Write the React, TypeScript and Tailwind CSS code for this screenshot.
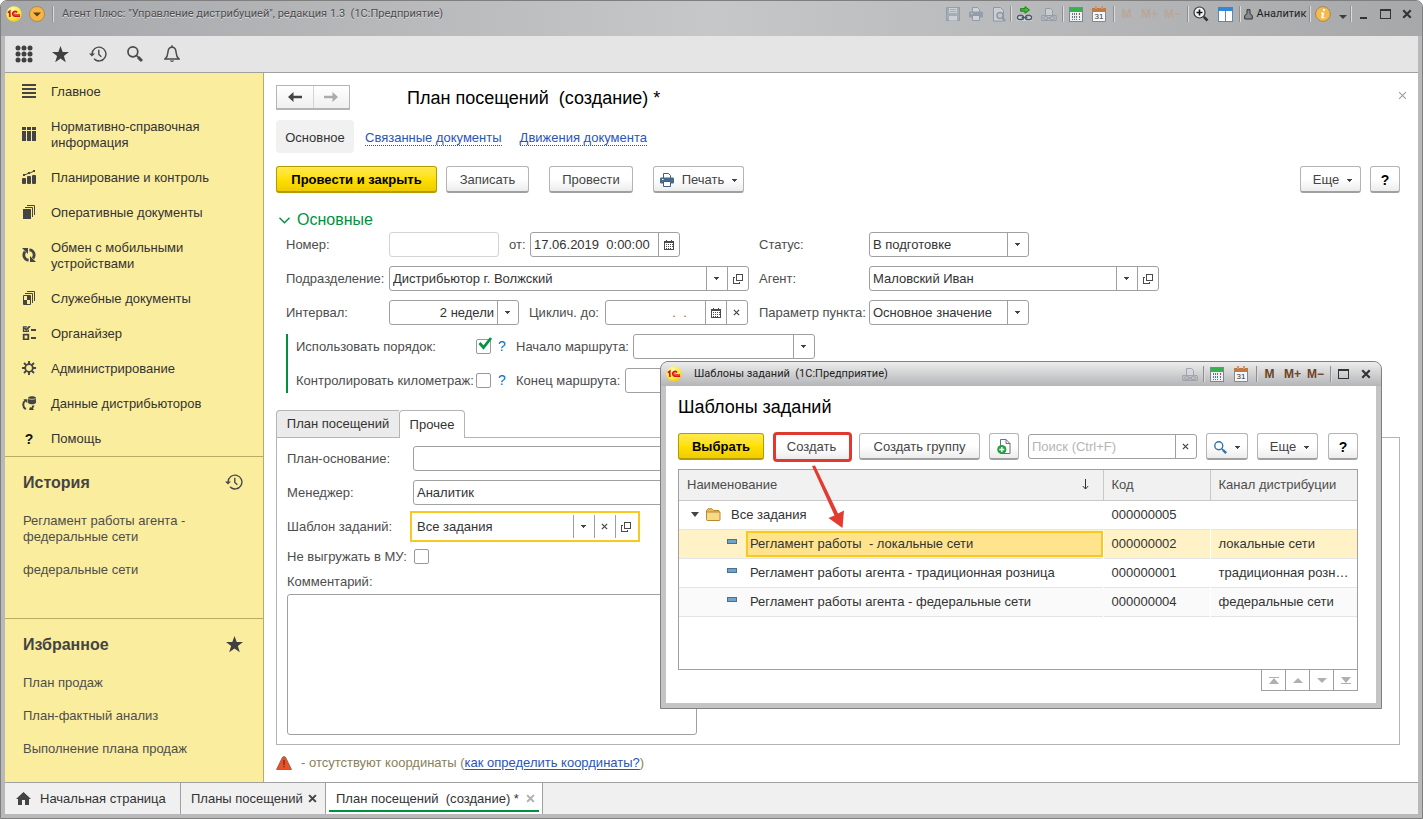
import React from "react";
import clsx from "clsx";

type IconProps = { className?: string };

/* ---------- small glyphs ---------- */

const Caret: React.FC<IconProps> = ({ className }) => (
  <svg width="5" height="3" viewBox="0 0 5 3" className={className} shapeRendering="crispEdges" fill="currentColor">
    <path d="M0 0h5v1H4v1H3v1H2V2H1V1H0z" />
  </svg>
);

const Cross: React.FC<IconProps & { size?: number; weight?: number }> = ({ className, size = 7, weight = 1.4 }) => (
  <svg width={size} height={size} viewBox="0 0 8 8" className={className} stroke="currentColor" strokeWidth={weight}>
    <path d="M1 1l6 6M7 1L1 7" />
  </svg>
);

const OpenIcon = () => (
  <svg width="10" height="10" viewBox="0 0 10 10" fill="none" stroke="#4a4a4a" shapeRendering="crispEdges">
    <path d="M3.5 0.5h6v6h-6zM2 3.5H0.5v6h6V8" />
  </svg>
);

const CalendarIcon = () => (
  <svg width="10" height="10" viewBox="0 0 10 10" shapeRendering="crispEdges">
    <path d="M0 1h10v9H0z" fill="#4a4a4a" />
    <path d="M2 0h1v2H2zM7 0h1v2H7z" fill="#4a4a4a" />
    <path d="M1 3h8v6H1z" fill="#fff" />
    <path d="M2 4h1v1H2zM4 4h1v1H4zM6 4h1v1H6zM2 6h1v1H2zM4 6h1v1H4zM6 6h1v1H6zM8 4h1v1H8zM8 6h1v1H8zM2 8h1v1H2zM4 8h1v1H4zM6 8h1v1H6z" fill="#4a4a4a" />
  </svg>
);

const Star: React.FC<IconProps> = ({ className }) => (
  <svg width="17" height="17" viewBox="0 0 17 17" className={className} fill="#404040">
    <path d="M8.5 0l2.2 6H17l-5.1 3.9 1.9 6.3-5.3-3.8-5.3 3.8 1.9-6.3L0 6h6.3z" />
  </svg>
);

const HistoryIcon: React.FC<IconProps> = ({ className }) => (
  <svg width="18" height="18" viewBox="0 0 18 18" className={className} fill="none" stroke="#4a4a4a" strokeWidth="1.4">
    <path d="M3.1 9A6.9 6.9 0 1 1 5 13.8" />
    <path d="M6.5 15.2a6.9 6.9 0 0 0 3 .7" />
    <path d="M9.8 4.8v4.6l2.6 2.4" />
    <path d="M0 8.4h6L3 11.6z" fill="#4a4a4a" stroke="none" />
  </svg>
);

const Logo: React.FC = () => (
  <svg width="16" height="16" viewBox="0 0 16 16" aria-hidden="true">
    <defs>
      <radialGradient id="logoFill" cx="0.4" cy="0.3" r="0.8">
        <stop offset="0" stopColor="#fffbc0" />
        <stop offset="0.6" stopColor="#fde93a" />
        <stop offset="1" stopColor="#e8b81c" />
      </radialGradient>
    </defs>
    <circle cx="8" cy="8" r="7.7" fill="url(#logoFill)" />
    <g fill="none" stroke="#d8141c" strokeWidth="1.7">
      <path d="M1.8 6.6L3.8 5.2V11" />
      <path d="M11 6.4A2.4 2.4 0 1 0 8.6 10.2H14" />
      <path d="M9.6 7.4a.9.9 0 1 0-.6 1.2H14" strokeWidth="0.8" />
    </g>
  </svg>
);

const PrinterIcon: React.FC<{ pale?: boolean }> = ({ pale }) => (
  <svg width="14" height="14" viewBox="0 0 14 14" className={clsx(pale && "opacity-35")}>
    <path d="M3.5 5V.5h5l2 2V5" fill="#fff" stroke="#3f5f80" />
    <rect x="0" y="4.5" width="14" height="6" rx="1.2" fill="#46698c" />
    <path d="M3.5 8.5h7v5h-7z" fill="#fff" stroke="#3f5f80" />
    <path d="M2 6h1.5v1H2z" fill="#fff" />
  </svg>
);

const LinkPrinter = () => (
  <svg width="16" height="15" viewBox="0 0 16 15" fill="none" stroke="#7d8793" className="opacity-60">
    <path d="M4.5 8V1.5h5l2 2V8" fill="#d6dbe0" />
    <path d="M.8 13.4h14.4V8.6H.8z" fill="#c3c8cf" />
    <rect x="2.5" y="9.8" width="4.6" height="2.6" rx="1.2" />
    <rect x="8.9" y="9.8" width="4.6" height="2.6" rx="1.2" />
    <path d="M6 11.1h4" />
  </svg>
);

const CalcIcon = () => (
  <svg width="14" height="15" viewBox="0 0 14 15" shapeRendering="crispEdges">
    <path d="M.5.5h13v14H.5z" fill="#eef1f3" stroke="#7b8791" />
    <path d="M1 1h12v4H1z" fill="#35b24a" />
    <path d="M3 6h1v2H3zM5 6h1v2H5zM7 6h1v2H7zM3 9h1v2H3zM5 9h1v2H5zM7 9h1v2H7zM10 9h1v2h-1zM3 12h1v1H3zM5 12h1v1H5zM7 12h1v1H7zM10 12h1v1h-1z" fill="#6b747c" />
    <path d="M10 6h1v2h-1z" fill="#dd3b2a" />
  </svg>
);

const DateIcon = () => (
  <svg width="14" height="16" viewBox="0 0 14 16">
    <path d="M.5 2.5h13v13H.5z" fill="#f6f8fa" stroke="#7e8a94" />
    <path d="M0 2h14v4H0z" fill="#c07a46" />
    <path d="M3 0h2v3H3zM9 0h2v3H9z" fill="#d89468" />
    <text x="7" y="13.4" fontSize="8" textAnchor="middle" fill="#333" fontFamily="Liberation Sans, sans-serif">31</text>
  </svg>
);

const SearchGlass: React.FC<IconProps & { size?: number; color?: string }> = ({ size = 16, color = "#4a4a4a", className }) => (
  <svg width={size} height={size} viewBox="0 0 15 15" className={className} fill="none" stroke={color}>
    <circle cx="5.5" cy="5.5" r="4.6" strokeWidth="1.6" />
    <path d="M9 9l1.6 1.6" strokeWidth="1.5" />
    <path d="M10.4 10.4l3.6 3.6" strokeWidth="2.8" />
  </svg>
);

/* ---------- section icons of the side panel ---------- */

const sectionIcons: Record<string, React.ReactNode> = {
  main: <path d="M0 0h14v2H0zM0 4h14v2H0zM0 8h14v2H0zM0 12h14v2H0z" shapeRendering="crispEdges" />,
  reference: <path d="M0 0h4v3H0zM5 0h4v3H5zM10 0h4v3h-4zM0 4h4v10H0zM5 4h4v10H5zM10 4h4v10h-4z" shapeRendering="crispEdges" />,
  planning: (
    <>
      <rect x="0" y="8" width="4" height="6" rx="1" />
      <rect x="5" y="6" width="4" height="8" rx="1" />
      <rect x="10" y="5" width="4" height="9" rx="1" />
      <path d="M1 5.5L6 3.5l1.5-.2L12.5.8" fill="none" stroke="#444" strokeWidth="1" />
      <path d="M1 4h2v2H1zM6 2h2v2H6zM11 0h2v2h-2z" />
    </>
  ),
  docs: (
    <>
      <path d="M1 4h8v10H1z" />
      <path d="M3 2.5h7.5V12M5 .5h7.5V10" fill="none" stroke="#444" />
    </>
  ),
  exchange: (
    <g fill="none" stroke="#444" strokeWidth="2.8">
      <path d="M6.6 12.2C2.6 12 .4 7.4 3 3.6" />
      <path d="M7.4 1.8C11.400 2 13.6 6.600 11 10.4" />
      <path d="M0 0h6v6zM14 14H8V8z" fill="#444" stroke="none" />
    </g>
  ),
  service: (
    <>
      <path d="M1.5 4.5h7v9h-7z" fill="none" stroke="#444" />
      <path d="M3 2.5h7.5V12M5 .5h7.5V10" fill="none" stroke="#444" />
      <path d="M5 5h3v4H5zM2 9h3v4H2z" />
    </>
  ),
  organizer: (
    <>
      <path d="M1.7 8.7h4.6v4.6H1.7z" fill="none" stroke="#444" strokeWidth="1.8" />
      <path d="M5 .9H1.5v4.4h4.8V3.5" fill="none" stroke="#444" strokeWidth="1.3" />
      <path d="M2.2 1.8l2 2L8 0" fill="none" stroke="#444" strokeWidth="1.8" />
      <path d="M9 3h5v2H9zM9 11h5v2H9z" />
    </>
  ),
  admin: (
    <g fill="none" stroke="#444">
      <circle cx="7" cy="7" r="3.8" strokeWidth="1.8" />
      <path d="M7 0v3M7 11v3M0 7h3M11 7h3M2 2l2.2 2.2M9.8 9.8L12 12M12 2L9.8 4.2M4.2 9.8L2 12" strokeWidth="1.9" />
    </g>
  ),
  distributors: (
    <>
      <path d="M6 2.2C6-.4 14-.4 14 2.2v4.2c0 2.4-8 2.4-8 0z" />
      <path d="M6.3 2.6c1.6 1 5.8 1 7.4 0" stroke="#fbed9e" strokeWidth=".7" fill="none" />
      <path d="M3.6 4.2C.4 6.5.4 11 3.8 13.2" fill="none" stroke="#444" strokeWidth="2" />
      <path d="M1.4 3.2h4v4z" />
      <path d="M7 14h5l-1-1.4 1.6-3h-2.4L9.4 11.8 8 11z" />
    </>
  ),
};

const sections = [
  { icon: "main", title: "Главное" },
  { icon: "reference", title: "Нормативно-справочная информация" },
  { icon: "planning", title: "Планирование и контроль" },
  { icon: "docs", title: "Оперативные документы" },
  { icon: "exchange", title: "Обмен с мобильными устройствами" },
  { icon: "service", title: "Служебные документы" },
  { icon: "organizer", title: "Органайзер" },
  { icon: "admin", title: "Администрирование" },
  { icon: "distributors", title: "Данные дистрибьюторов" },
  { icon: "help", title: "Помощь" },
];

const history = ["Регламент работы агента - федеральные сети", "федеральные сети"];
const favorites = ["План продаж", "План-фактный анализ", "Выполнение плана продаж"];

const templates = [
  { name: "Регламент работы\u00a0 - локальные сети", code: "000000002", channel: "локальные сети", selected: true },
  { name: "Регламент работы агента - традиционная розница", code: "000000001", channel: "традиционная розница" },
  { name: "Регламент работы агента - федеральные сети", code: "000000004", channel: "федеральные сети" },
];

/* ---------- controls ---------- */

const Button: React.FC<React.ButtonHTMLAttributes<HTMLButtonElement> & { primary?: boolean }> = ({
  primary,
  className,
  children,
  ...rest
}) => (
  <button
    type="button"
    className={clsx(
      "flex h-[27px] shrink-0 items-center justify-center rounded-[3px] border border-b-2 pt-0.5 whitespace-nowrap",
      primary
        ? "border-[#b49b00] bg-linear-to-b from-[#ffe94a] via-[#ffe000] to-[#efcc00] font-bold text-black"
        : "border-[#b4b4b4] border-b-[#a0a0a0] bg-linear-to-b from-white from-50% to-[#ececec] text-[#444]",
      className
    )}
    {...rest}
  >
    {children}
  </button>
);

type Action = "drop" | "clear" | "open" | "date";

const actionNames: Record<Action, string> = {
  drop: "Выбрать из списка",
  clear: "Очистить",
  open: "Открыть",
  date: "Календарь",
};

const ActionIcon: React.FC<{ action: Action }> = ({ action }) => {
  if (action === "drop") return <Caret />;
  if (action === "clear") return <Cross />;
  if (action === "open") return <OpenIcon />;
  return <CalendarIcon />;
};

type FieldProps = {
  id: string;
  value?: string;
  placeholder?: string;
  actions?: Action[];
  width: string;
  className?: string;
  inputClass?: string;
  frame?: string;
};

const Field: React.FC<FieldProps> = ({ id, value = "", placeholder, actions = [], width, className, inputClass, frame }) => (
  <div className={clsx("flex shrink-0 bg-white", frame || "h-[25px] rounded-[3px] border border-[#a0a0a0]", width, className)}>
    <input
      id={id}
      type="text"
      defaultValue={value}
      placeholder={placeholder}
      className={clsx("w-0 min-w-0 flex-1 bg-transparent px-[3px] outline-none placeholder:text-[#b5b5b5]", inputClass || "text-[#333]")}
    />
    {actions.map((action) => (
      <button
        key={action}
        type="button"
        aria-label={actionNames[action]}
        className="flex w-[21px] shrink-0 items-center justify-center border-l border-[#a0a0a0] pr-px text-[#444]"
      >
        <ActionIcon action={action} />
      </button>
    ))}
  </div>
);

const SelectField: React.FC<{ id: string; value: string; width: string; right?: boolean }> = ({ id, value, width, right }) => (
  <div className={clsx("flex h-[25px] shrink-0 rounded-[3px] border border-[#a0a0a0] bg-white", width)}>
    <select
      id={id}
      defaultValue={value}
      className={clsx("w-0 min-w-0 flex-1 appearance-none bg-transparent px-[3px] text-[#333] outline-none", right && "[text-align-last:right]")}
    >
      <option>{value}</option>
    </select>
    <span className="pointer-events-none flex w-[21px] items-center justify-center border-l border-[#a0a0a0] pr-px text-[#444]">
      <Caret />
    </span>
  </div>
);

const Checkbox: React.FC<{ id: string; checked?: boolean }> = ({ id, checked }) => (
  <span className="relative flex h-[15px] w-[15px] shrink-0">
    <input
      id={id}
      type="checkbox"
      defaultChecked={checked}
      className="peer h-[15px] w-[15px] appearance-none rounded-[2px] border border-[#999] bg-white"
    />
    <svg width="15" height="14" viewBox="0 0 15 14" className="pointer-events-none absolute -top-0.5 left-0.5 hidden peer-checked:block">
      <path d="M1.5 6l4 4.5L13 1" fill="none" stroke="#00963f" strokeWidth="2.8" />
    </svg>
  </span>
);

const FormLabel: React.FC<{ htmlFor: string; className?: string; children: React.ReactNode }> = ({ htmlFor, className, children }) => (
  <label htmlFor={htmlFor} className={clsx("shrink-0 whitespace-nowrap", className)}>
    {children}
  </label>
);

const BarButton: React.FC<{ label: string; width?: string; children: React.ReactNode }> = ({ label, width, children }) => (
  <button type="button" aria-label={label} className={clsx("flex h-6 shrink-0 items-center justify-center", width || "w-[23px]")}>
    {children}
  </button>
);

const BarDivider: React.FC<{ className?: string }> = ({ className }) => (
  <span className={clsx("h-4 w-0.5 shrink-0 border-r border-[#dcdcdc] bg-[#8f8f91]", className)} />
);

const Memory: React.FC<{ pale?: boolean }> = ({ pale }) => (
  <>
    {["M", "M+", "M−"].map((m) => (
      <button
        key={m}
        type="button"
        className={clsx("h-6 w-[23px] shrink-0 text-[12px] font-bold", pale ? "text-[#b9a79b]" : "text-[#6e4223]")}
      >
        {m}
      </button>
    ))}
  </>
);

/* ---------- window parts ---------- */

const TitleBar: React.FC = () => (
  <header className="flex h-[35px] items-start rounded-t-[6px] bg-linear-to-r from-[#a6a7aa] via-[#c6c7c8] to-[#a7a8aa] pt-px pr-1 text-[11px]">
    <div className="flex h-6 items-center pl-[5px]">
      <Logo />
      <button type="button" aria-label="Главное меню" className="ml-[7px]">
        <svg width="16" height="16" viewBox="0 0 16 16">
          <circle cx="8" cy="8" r="7.5" fill="#f6b545" stroke="#a9813a" strokeWidth=".8" />
          <path d="M4 6.5h8L8 10.5z" fill="#5d4214" />
        </svg>
      </button>
      <BarDivider className="ml-[7px]" />
      <span className="ml-2 font-[Roboto,sans-serif] whitespace-pre text-[#4c4c4e] [text-shadow:0_1px_0_#dedede]">
        {'Агент Плюс: "Управление дистрибуцией", редакция 1.3  (1С:Предприятие)'}
      </span>
    </div>
    <div className="ml-auto flex h-6 items-center">
      <BarButton label="Сохранить">
        <svg width="14" height="14" viewBox="0 0 14 14" className="opacity-40">
          <path d="M.5.5h13v13H.5z" fill="#7b98b4" stroke="#56718c" />
          <path d="M3 1h8v5H3zM3 9h8v4.5H3z" fill="#e8edf2" />
          <path d="M4 2.5h6M4 4.5h6" stroke="#7b98b4" />
        </svg>
      </BarButton>
      <BarButton label="Печать"><PrinterIcon pale /></BarButton>
      <BarButton label="Просмотр">
        <svg width="14" height="15" viewBox="0 0 14 15" fill="none" stroke="#56718c" className="opacity-45">
          <path d="M1.5.5h7l3 3V14h-10z" fill="#e4e9ee" />
          <circle cx="8" cy="8.5" r="3" strokeWidth="1.5" fill="#cdd8e2" />
          <path d="M10.2 10.8l3 3.2" strokeWidth="2" />
        </svg>
      </BarButton>
      <BarDivider />
      <BarButton label="Перейти по ссылке" width="w-[25px]">
        <svg width="17" height="16" viewBox="0 0 17 16" fill="none" stroke="#4d5a66">
          <path d="M4.5 4.5V2.7H9V.6L13.5 4 9 7.2V5.2H4.5z" fill="#3fc02f" stroke="#1d7d18" />
          <path d="M.8 14.8h15.4V8.8H.8z" fill="#d5dadf" stroke="none" />
          <rect x="1.5" y="9.5" width="6" height="4" rx="1.8" strokeWidth="1.4" />
          <rect x="9.5" y="9.5" width="6" height="4" rx="1.8" strokeWidth="1.4" />
          <path d="M5.500 11.5h6" strokeWidth="1.4" />
        </svg>
      </BarButton>
      <BarButton label="Печать ссылки"><LinkPrinter /></BarButton>
      <BarDivider className="ml-0.5" />
      <BarButton label="Калькулятор"><CalcIcon /></BarButton>
      <BarButton label="Календарь"><DateIcon /></BarButton>
      <BarDivider className="ml-[3px]" />
      <Memory pale />
      <BarDivider className="ml-[3px]" />
      <BarButton label="Масштаб">
        <svg width="16" height="16" viewBox="0 0 16 16" fill="none" stroke="#333">
          <circle cx="6.5" cy="6.5" r="5.5" fill="#f3f3f3" strokeWidth="1.2" />
          <path d="M3.5 6.5h6M6.5 3.5v6" strokeWidth="1.6" stroke="#111" />
          <path d="M10.8 10.8l3.7 3.7" strokeWidth="2.6" />
        </svg>
      </BarButton>
      <BarButton label="Панели" width="w-[27px]">
        <svg width="15" height="15" viewBox="0 0 15 15" shapeRendering="crispEdges">
          <path d="M.5.5h14v14H.5z" fill="#fff" stroke="#5b88b3" />
          <path d="M0 0h15v4H0z" fill="#3487d6" />
          <path d="M7 4h1v10H7z" fill="#5b88b3" />
        </svg>
      </BarButton>
      <BarDivider />
      <button type="button" className="flex h-6 w-[68px] shrink-0 items-center justify-center gap-1 font-[Roboto,sans-serif] text-[#222]">
        <svg width="9" height="11" viewBox="0 0 9 11" fill="#8b8b8d" stroke="#333">
          <path d="M3 .7h3v4l2.3 1.8V10H.7V6.5L3 4.7z" />
        </svg>
        Аналитик
      </button>
      <BarDivider />
      <BarButton label="Информация" width="w-6">
        <svg width="16" height="16" viewBox="0 0 16 16">
          <circle cx="8" cy="8" r="7.4" fill="#f5b94d" stroke="#9d8352" strokeWidth=".9" />
          <path d="M8 3h2v2H8zM6 6.5h3.2L8.3 11h1.2v1.3H6L7 7.8H6z" fill="#fff" />
        </svg>
      </BarButton>
      <BarButton label="Еще" width="w-[15px]">
        <svg width="8" height="4" viewBox="0 0 8 4" className="mt-1.5">
          <path d="M0 0h8L4 4z" fill="#3c3c3c" />
        </svg>
      </BarButton>
      <BarDivider />
      <BarButton label="Свернуть" width="w-[22px]">
        <span className="mt-2 h-0.5 w-[7px] bg-[#333]" />
      </BarButton>
      <BarButton label="Развернуть" width="w-[22px]">
        <span className="h-[10px] w-[11px] border border-t-2 border-[#333]" />
      </BarButton>
      <BarButton label="Закрыть" width="w-[22px]">
        <Cross size={10} weight={1.7} className="text-[#333]" />
      </BarButton>
    </div>
  </header>
);

const Toolbar: React.FC = () => (
  <div className="flex h-[37px] items-center border-b border-[#a0a0a0] bg-[#e5e5e5]">
    <BarButton label="Меню функций" width="w-[37px]">
      <svg width="18" height="18" viewBox="0 0 18 18" fill="#404040">
        {[3, 9, 15].map((y) => [3, 9, 15].map((x) => <circle key={`${x}-${y}`} cx={x} cy={y} r="2.5" />))}
      </svg>
    </BarButton>
    <BarButton label="Избранное" width="w-[37px]"><Star /></BarButton>
    <BarButton label="История" width="w-[37px]"><HistoryIcon /></BarButton>
    <BarButton label="Поиск" width="w-[37px]"><SearchGlass /></BarButton>
    <BarButton label="Оповещения" width="w-[37px]">
      <svg width="16" height="18" viewBox="0 0 16 18" fill="none" stroke="#4a4a4a" strokeWidth="1.5">
        <path d="M1 14c2-1.7 2.7-3.3 2.9-6.5C4.1 4 5.5 2.3 8 2.3S11.9 4 12.1 7.5C12.3 10.7 13 12.3 15 14z" />
        <path d="M8 .3v2" />
        <path d="M5.8 15.5a2.3 2 0 0 0 4.4 0z" fill="#4a4a4a" stroke="none" />
      </svg>
    </BarButton>
  </div>
);

const Sidebar: React.FC = () => (
  <aside className="w-[259px] shrink-0 border-r border-[#b9ab63] bg-[#fbed9e] text-[#333]">
    <nav className="pb-px">
      {sections.map((s) => (
        <a key={s.title} href="#" className="flex items-center pt-[11px] pb-2 pl-[17px] leading-4">
          {s.icon === "help" ? (
            <span className="w-[14px] text-center text-[14px] font-bold text-[#111]">?</span>
          ) : (
            <svg width="14" height="14" viewBox="0 0 14 14" fill="#444" className="mb-0.5 shrink-0">
              {sectionIcons[s.icon]}
            </svg>
          )}
          <span className="ml-[15px] w-[165px]">{s.title}</span>
        </a>
      ))}
    </nav>
    <section className="min-h-[162px] border-t border-[#b9ab63] pt-[15px]">
      <SideHeading title="История"><HistoryIcon /></SideHeading>
      <SideLinks items={history} />
    </section>
    <section className="border-t border-[#b9ab63] pt-[15px]">
      <SideHeading title="Избранное"><Star /></SideHeading>
      <SideLinks items={favorites} />
    </section>
  </aside>
);

const SideHeading: React.FC<{ title: string; children: React.ReactNode }> = ({ title, children }) => (
  <div className="mb-3 flex h-5 items-center justify-between pr-5 pl-[18px]">
    <h2 className="pt-0.5 text-[16px] font-bold text-[#444]">{title}</h2>
    {children}
  </div>
);

const SideLinks: React.FC<{ items: string[] }> = ({ items }) => (
  <ul className="pl-[18px] leading-4 text-[#4d4d4d]">
    {items.map((item) => (
      <li key={item} className="w-[190px] pt-[9px] pb-2">
        <a href="#">{item}</a>
      </li>
    ))}
  </ul>
);

const DocumentForm: React.FC = () => (
  <main className="flex min-w-0 flex-1 flex-col bg-white pt-3 pr-[18px] pl-3 text-[#4d4d4d]">
    <div className="flex h-[25px] items-center">
      <div className="flex h-[25px] w-[74px] shrink-0 border border-b-2 border-[#b4b4b4] bg-linear-to-b from-white to-[#f0f0f0]">
        <button type="button" aria-label="Назад" className="flex flex-1 items-center justify-center border-r border-[#d4d4d4] text-[#444]">
          <ArrowLeft />
        </button>
        <button type="button" aria-label="Вперед" className="flex flex-1 items-center justify-center text-[#ababab]">
          <ArrowLeft className="rotate-180" />
        </button>
      </div>
      <h1 className="ml-[57px] pt-0.5 text-[18px] whitespace-pre text-black">{"План посещений  (создание) *"}</h1>
      <button type="button" aria-label="Закрыть форму" className="-mr-3 ml-auto flex h-5 w-5 items-center justify-center self-start text-[#999]">
        <Cross size={9} weight={0.9} />
      </button>
    </div>

    <nav className="mt-[10px] flex h-[33px] items-center whitespace-nowrap">
      <a href="#" className="flex h-[33px] w-[78px] items-center justify-center rounded-[4px] bg-[#f1f1f1] pt-0.5 text-[#333]">Основное</a>
      <a href="#" className="ml-[11px] border-b border-dotted border-[#2a55b8] pt-[3px] leading-[14px] text-[#2a55b8]">Связанные документы</a>
      <a href="#" className="ml-[18px] border-b border-dotted border-[#2a55b8] pt-[3px] leading-[14px] text-[#2a55b8]">Движения документа</a>
    </nav>

    <div className="mt-[13px] flex">
      <Button primary className="w-[161px]">Провести и закрыть</Button>
      <Button className="ml-[9px] w-[83px]">Записать</Button>
      <Button className="ml-5 w-[84px]">Провести</Button>
      <Button className="ml-5 w-[91px]">
        <PrinterIcon />
        <span className="mx-2">Печать</span>
        <Caret />
      </Button>
      <Button className="ml-auto w-[61px] gap-2 pl-1">Еще <Caret /></Button>
      <Button className="ml-[9px] w-[30px] text-[14px] font-bold text-black">?</Button>
    </div>

    <h2 className="mt-[17px] flex h-5 items-center gap-[7px] pl-[3px] text-[16px] text-[#00913f]">
      <svg width="11" height="7" viewBox="0 0 11 7" fill="none" stroke="#00913f" strokeWidth="1.4"><path d="M.5.8l5 5 5-5" /></svg>
      Основные
    </h2>

    <div className="mt-0.5 flex flex-col gap-[9px] pl-[10px]">
      <div className="flex items-center">
        <div className="flex w-[473px] shrink-0 items-center">
          <FormLabel htmlFor="number" className="w-[103px]">Номер:</FormLabel>
          <Field id="number" width="w-[110px]" frame="h-[25px] rounded-[3px] border border-[#d4d4d4]" />
          <FormLabel htmlFor="date" className="ml-[10px] w-[21px]">от:</FormLabel>
          <Field id="date" value={"17.06.2019\u00a0 0:00:00"} width="w-[150px]" actions={["date"]} />
        </div>
        <FormLabel htmlFor="status" className="w-[110px]">Статус:</FormLabel>
        <SelectField id="status" value="В подготовке" width="w-[160px]" />
      </div>
      <div className="flex items-center">
        <div className="flex w-[473px] shrink-0 items-center">
          <FormLabel htmlFor="division" className="w-[103px]">Подразделение:</FormLabel>
          <Field id="division" value="Дистрибьютор г. Волжский" width="w-[360px]" actions={["drop", "open"]} />
        </div>
        <FormLabel htmlFor="agent" className="w-[110px]">Агент:</FormLabel>
        <Field id="agent" value="Маловский Иван" width="w-[290px]" actions={["drop", "open"]} />
      </div>
      <div className="flex items-center">
        <div className="flex w-[473px] shrink-0 items-center">
          <FormLabel htmlFor="interval" className="w-[103px]">Интервал:</FormLabel>
          <SelectField id="interval" value="2 недели" width="w-[130px]" right />
          <FormLabel htmlFor="cycle" className="ml-[10px] w-[76px]">Циклич. до:</FormLabel>
          <Field id="cycle" value={"  .  .  "} width="w-[143px]" inputClass="pr-[11px] text-right text-[#9a6a35]" actions={["date", "clear"]} />
        </div>
        <FormLabel htmlFor="point" className="w-[110px]">Параметр пункта:</FormLabel>
        <SelectField id="point" value="Основное значение" width="w-[160px]" />
      </div>

      <div className="flex flex-col gap-[9px] border-l-2 border-[#00913f] pl-2">
        <div className="flex h-[25px] items-center">
          <FormLabel htmlFor="useOrder" className="w-[180px]">Использовать порядок:</FormLabel>
          <Checkbox id="useOrder" checked />
          <a href="#" className="w-[25px] pl-[7px] text-[14px] text-[#0b6fc2]">?</a>
          <FormLabel htmlFor="routeStart" className="w-[117px]">Начало маршрута:</FormLabel>
          <SelectField id="routeStart" value="" width="w-[182px]" />
        </div>
        <div className="flex h-[25px] items-center">
          <FormLabel htmlFor="mileage" className="w-[180px]">Контролировать километраж:</FormLabel>
          <Checkbox id="mileage" />
          <a href="#" className="w-[25px] pl-[7px] text-[14px] text-[#0b6fc2]">?</a>
          <FormLabel htmlFor="routeEnd" className="w-[109px]">Конец маршрута:</FormLabel>
          <SelectField id="routeEnd" value="" width="w-[190px]" />
        </div>
      </div>
    </div>

    <div className="z-10 mt-[17px] -mb-px flex h-[28px]">
      <button type="button" className="h-[27px] w-[123px] rounded-tl-[4px] border border-r-0 border-b-0 border-[#b4b4b4] bg-[#ebebeb] text-[#333]">План посещений</button>
      <button type="button" className="h-[28px] w-[66px] rounded-t-[4px] border border-b-0 border-[#b4b4b4] bg-white text-[#333]">Прочее</button>
    </div>
    <section className="flex flex-1 flex-col border border-[#b4b4b4] px-[10px] pt-2 pb-[9px]">
      <div className="flex items-center">
        <FormLabel htmlFor="basis" className="w-[126px]">План-основание:</FormLabel>
        <Field id="basis" width="w-[284px]" />
      </div>
      <div className="mt-[9px] flex items-center">
        <FormLabel htmlFor="manager" className="w-[126px]">Менеджер:</FormLabel>
        <Field id="manager" value="Аналитик" width="w-[284px]" />
      </div>
      <div className="mt-1.5 flex items-center">
        <FormLabel htmlFor="template" className="w-[123px]">Шаблон заданий:</FormLabel>
        <Field
          id="template"
          value="Все задания"
          width="w-[230px]"
          frame="h-[31px] border-2 border-[#fac91e] py-0.5 pr-0.5 pl-0.5"
          actions={["drop", "clear", "open"]}
        />
      </div>
      <div className="mt-[7px] flex h-[15px] items-center">
        <FormLabel htmlFor="noExport" className="w-[127px]">Не выгружать в МУ:</FormLabel>
        <Checkbox id="noExport" />
      </div>
      <FormLabel htmlFor="comment" className="mt-[10px] leading-4">Комментарий:</FormLabel>
      <textarea id="comment" className="mt-1 w-[410px] flex-1 resize-none rounded-[3px] border border-[#a0a0a0]" />
    </section>

    <p className="flex h-[37px] items-center pb-0.5 text-[#8a7f5c]">
      <svg width="16" height="14" viewBox="0 0 16 14" className="mr-[9px]">
        <path d="M6.5 1.2Q8-.2 9.5 1.2L15.5 13.500H.5z" fill="#f04e23" stroke="#7a5a50" strokeWidth=".8" />
        <path d="M7.4 4h1.2v5H7.4zM7.4 10h1.2v1.3H7.4z" fill="#5d2a20" />
      </svg>
      <span>
        - отсутствуют координаты (<a href="#" className="text-[#2a55b8] underline underline-offset-2">как определить координаты?</a>)
      </span>
    </p>
  </main>
);

const ArrowLeft: React.FC<IconProps> = ({ className }) => (
  <svg width="14" height="10" viewBox="0 0 14 10" className={className} fill="currentColor">
    <path d="M5.5 0v3.8H14v2.4H5.5V10L0 5z" />
  </svg>
);

const OpenTabs: React.FC = () => (
  <footer className="flex h-8 border-t border-[#a0a0a0] bg-[#f0f0f0] text-[#333]">
    <a href="#" className="flex w-[176px] items-center border-r border-[#a0a0a0] pl-[11px] whitespace-nowrap">
      <svg width="15" height="13" viewBox="0 0 15 13" fill="#444" className="mr-[9px]">
        <path d="M7.5 0L15 7h-2v6H9V8H6v5H2V7H0z" />
      </svg>
      Начальная страница
    </a>
    <div className="flex w-[145px] items-center justify-between border-r border-[#a0a0a0] pr-2 pl-[10px] whitespace-nowrap">
      <a href="#">Планы посещений</a>
      <button type="button" aria-label="Закрыть вкладку"><Cross size={9} weight={1.8} className="text-[#444]" /></button>
    </div>
    <div className="flex w-[217px] border-r border-[#a0a0a0] bg-white px-[3px] pb-0.5">
      <div className="flex flex-1 items-center justify-between border-b-2 border-[#00913f] pt-1 pr-1 pl-[7px]">
        <a href="#" className="whitespace-pre">{"План посещений  (создание) *"}</a>
        <button type="button" aria-label="Закрыть вкладку"><Cross size={9} weight={1.8} className="text-[#b0b0b0]" /></button>
      </div>
    </div>
  </footer>
);

const pagerIcons = [
  { name: "В начало", path: "M0 0h10v1H0zM5 1l5 6H0z" },
  { name: "Вверх", path: "M5 1l5 5H0z" },
  { name: "Вниз", path: "M0 1h10L5 6z" },
  { name: "В конец", path: "M0 6h10v1H0zM0 0h10L5 6z" },
];

const TemplatesDialog: React.FC = () => (
  <div
    role="dialog"
    aria-label="Шаблоны заданий"
    className="absolute top-[360px] left-[659px] z-20 flex h-[348px] w-[722px] flex-col rounded-t-[8px] border border-[#808080] bg-[#c4c4c6] px-[5px] pb-[5px]"
  >
    <div className="-mx-[5px] flex h-6 items-center rounded-t-[7px] bg-linear-to-b from-[#ededed] to-[#b4b5b8] pl-[5px]">
      <Logo />
      <span className="ml-3 font-[Roboto,sans-serif] text-[11px] whitespace-pre text-[#222]">{"Шаблоны заданий  (1С:Предприятие)"}</span>
      <div className="ml-auto flex items-center pr-[5px]">
        <BarButton label="Печать ссылки"><LinkPrinter /></BarButton>
        <BarDivider className="ml-0.5" />
        <BarButton label="Калькулятор"><CalcIcon /></BarButton>
        <BarButton label="Календарь" width="w-[25px]"><DateIcon /></BarButton>
        <BarDivider className="ml-[3px]" />
        <Memory />
        <BarDivider className="ml-[3px]" />
        <BarButton label="Развернуть">
          <span className="h-[10px] w-[11px] border border-t-2 border-[#333]" />
        </BarButton>
        <BarButton label="Закрыть" width="w-[21px]">
          <Cross size={10} weight={1.7} className="text-[#333]" />
        </BarButton>
      </div>
    </div>

    <div className="flex flex-1 flex-col bg-white pt-[11px] pr-[18px] pb-3 pl-3 text-[#4d4d4d]">
      <h2 className="h-5 text-[18px] leading-5 text-black">Шаблоны заданий</h2>
      <div className="mt-4 flex h-[27px] items-center">
        <Button primary className="w-[86px]">Выбрать</Button>
        <button type="button" className="ml-[9px] h-[30px] w-[79px] shrink-0 rounded-[4px] border-3 border-[#df3a32] bg-linear-to-b from-white from-50% to-[#ececec] pr-0.5 text-[#444]">
          Создать
        </button>
        <Button className="ml-[7px] w-[121px]">Создать группу</Button>
        <Button className="ml-[9px] w-[30px]" aria-label="Создать копированием">
          <svg width="14" height="16" viewBox="0 0 14 16">
            <path d="M3.5.5H9l4 4v10H3.5z" fill="#fff" stroke="#5d7388" />
            <path d="M9 .5v4h4" fill="none" stroke="#5d7388" />
            <circle cx="4.8" cy="10.5" r="4.6" fill="#25a244" />
            <path d="M2.3 10.5h5M4.8 8v5" stroke="#fff" strokeWidth="1.5" />
          </svg>
        </Button>
        <Field id="search" placeholder="Поиск (Ctrl+F)" width="w-[169px]" className="ml-[9px]" actions={["clear"]} />
        <Button className="ml-[9px] w-[42px] gap-2" aria-label="Найти">
          <SearchGlass size={13} color="#2b74ad" />
          <Caret />
        </Button>
        <Button className="ml-[9px] w-[61px] gap-2 pl-1">Еще <Caret /></Button>
        <Button className="ml-auto w-[30px] text-[14px] font-bold text-black">?</Button>
      </div>

      <div className="mt-[9px] flex-1 border border-[#a0a0a0]">
        <table className="w-full table-fixed border-collapse text-left text-[#333]">
          <colgroup>
            <col />
            <col className="w-[107px]" />
            <col className="w-[147px]" />
          </colgroup>
          <thead className="text-[#4d4d4d]">
            <tr className="h-[30px] border-b border-[#c8c8c8] bg-[#f1f1f1]">
              <th className="p-0 pl-2 font-normal">
                <span className="flex items-center justify-between pr-[14px]">
                  Наименование
                  <svg width="7" height="11" viewBox="0 0 7 11" fill="none" stroke="#333"><path d="M3.5 0v10M.8 7l2.7 3 2.7-3" /></svg>
                </span>
              </th>
              <th className="border-l border-[#c8c8c8] p-0 pl-2 font-normal">Код</th>
              <th className="border-l border-[#c8c8c8] p-0 pl-2 font-normal">Канал дистрибуции</th>
            </tr>
          </thead>
          <tbody>
            <tr className="h-[29px] border-b border-[#e4e4e4]">
              <td className="p-0">
                <span className="flex items-center pl-3">
                  <svg width="8" height="5" viewBox="0 0 8 5"><path d="M0 0h8L4 5z" fill="#444" /></svg>
                  <svg width="15" height="13" viewBox="0 0 15 13" className="mr-[10px] ml-[7px]">
                    <path d="M.5 11V2.5L2 .8h4l1.5 1.7H13V4" fill="#e9bd5a" stroke="#b98a2c" />
                    <path d="M.5 4H14v7.5q0 1-1 1H1.5q-1 0-1-1z" fill="#f8d98a" stroke="#b98a2c" />
                  </svg>
                  Все задания
                </span>
              </td>
              <td className="border-l border-transparent p-0 pl-2">000000005</td>
              <td />
            </tr>
            {templates.map((t, i) => (
              <tr key={t.code} className={clsx("h-[29px] border-b border-[#e4e4e4]", t.selected ? "bg-[#fff2c6]" : i === 2 ? "bg-[#fafafa]" : "bg-white")}>
                <td className="p-0">
                  <span className="flex h-7 items-center pl-[48px]">
                    <svg width="10" height="5" viewBox="0 0 10 5" shapeRendering="crispEdges" className="mr-[9px] mb-1 shrink-0">
                      <path d="M.5.5h9v4h-9z" fill="#6fa3c8" stroke="#48718f" />
                    </svg>
                    <span className={clsx("flex h-[26px] flex-1 items-center border-2 pl-0.5 whitespace-nowrap", t.selected ? "border-[#fac91e] bg-[#ffe48d]" : "border-transparent")}>
                      {t.name}
                    </span>
                  </span>
                </td>
                <td className={clsx("p-0 pl-2", t.selected ? "border-l border-white" : "border-l border-transparent")}>{t.code}</td>
                <td className={clsx("truncate p-0 pr-1 pl-2", t.selected ? "border-l border-white" : "border-l border-transparent")}>{t.channel}</td>
              </tr>
            ))}
          </tbody>
        </table>
      </div>
      <div className="ml-auto flex h-[21px] border-r border-b border-[#a0a0a0]">
        {pagerIcons.map((p) => (
          <button key={p.name} type="button" aria-label={p.name} className="flex w-6 items-center justify-center border-l border-[#a0a0a0]">
            <svg width="10" height="7" viewBox="0 0 10 7" fill="#b0b0b0"><path d={p.path} /></svg>
          </button>
        ))}
      </div>
    </div>

    {/* pointer from the "Создать" button to the new row */}
    <svg width="36" height="66" viewBox="0 0 36 66" className="pointer-events-none absolute top-[103px] left-[149px]">
      <path d="M2 1l3-.5 23 48 6-3-1.500 17.500L18.500 53l6-2.500z" fill="#e23b30" />
    </svg>
  </div>
);

const App: React.FC = () => (
  <div className="relative flex min-h-screen flex-col rounded-t-[7px] border border-[#7f7f7f] bg-[#b9b9bb] font-['Liberation_Sans',Arial,sans-serif] text-[13px]">
    <TitleBar />
    <div className="flex flex-1 flex-col px-1 pb-1">
      <Toolbar />
      <div className="flex flex-1">
        <Sidebar />
        <DocumentForm />
      </div>
      <OpenTabs />
    </div>
    <TemplatesDialog />
  </div>
);

export default App;
